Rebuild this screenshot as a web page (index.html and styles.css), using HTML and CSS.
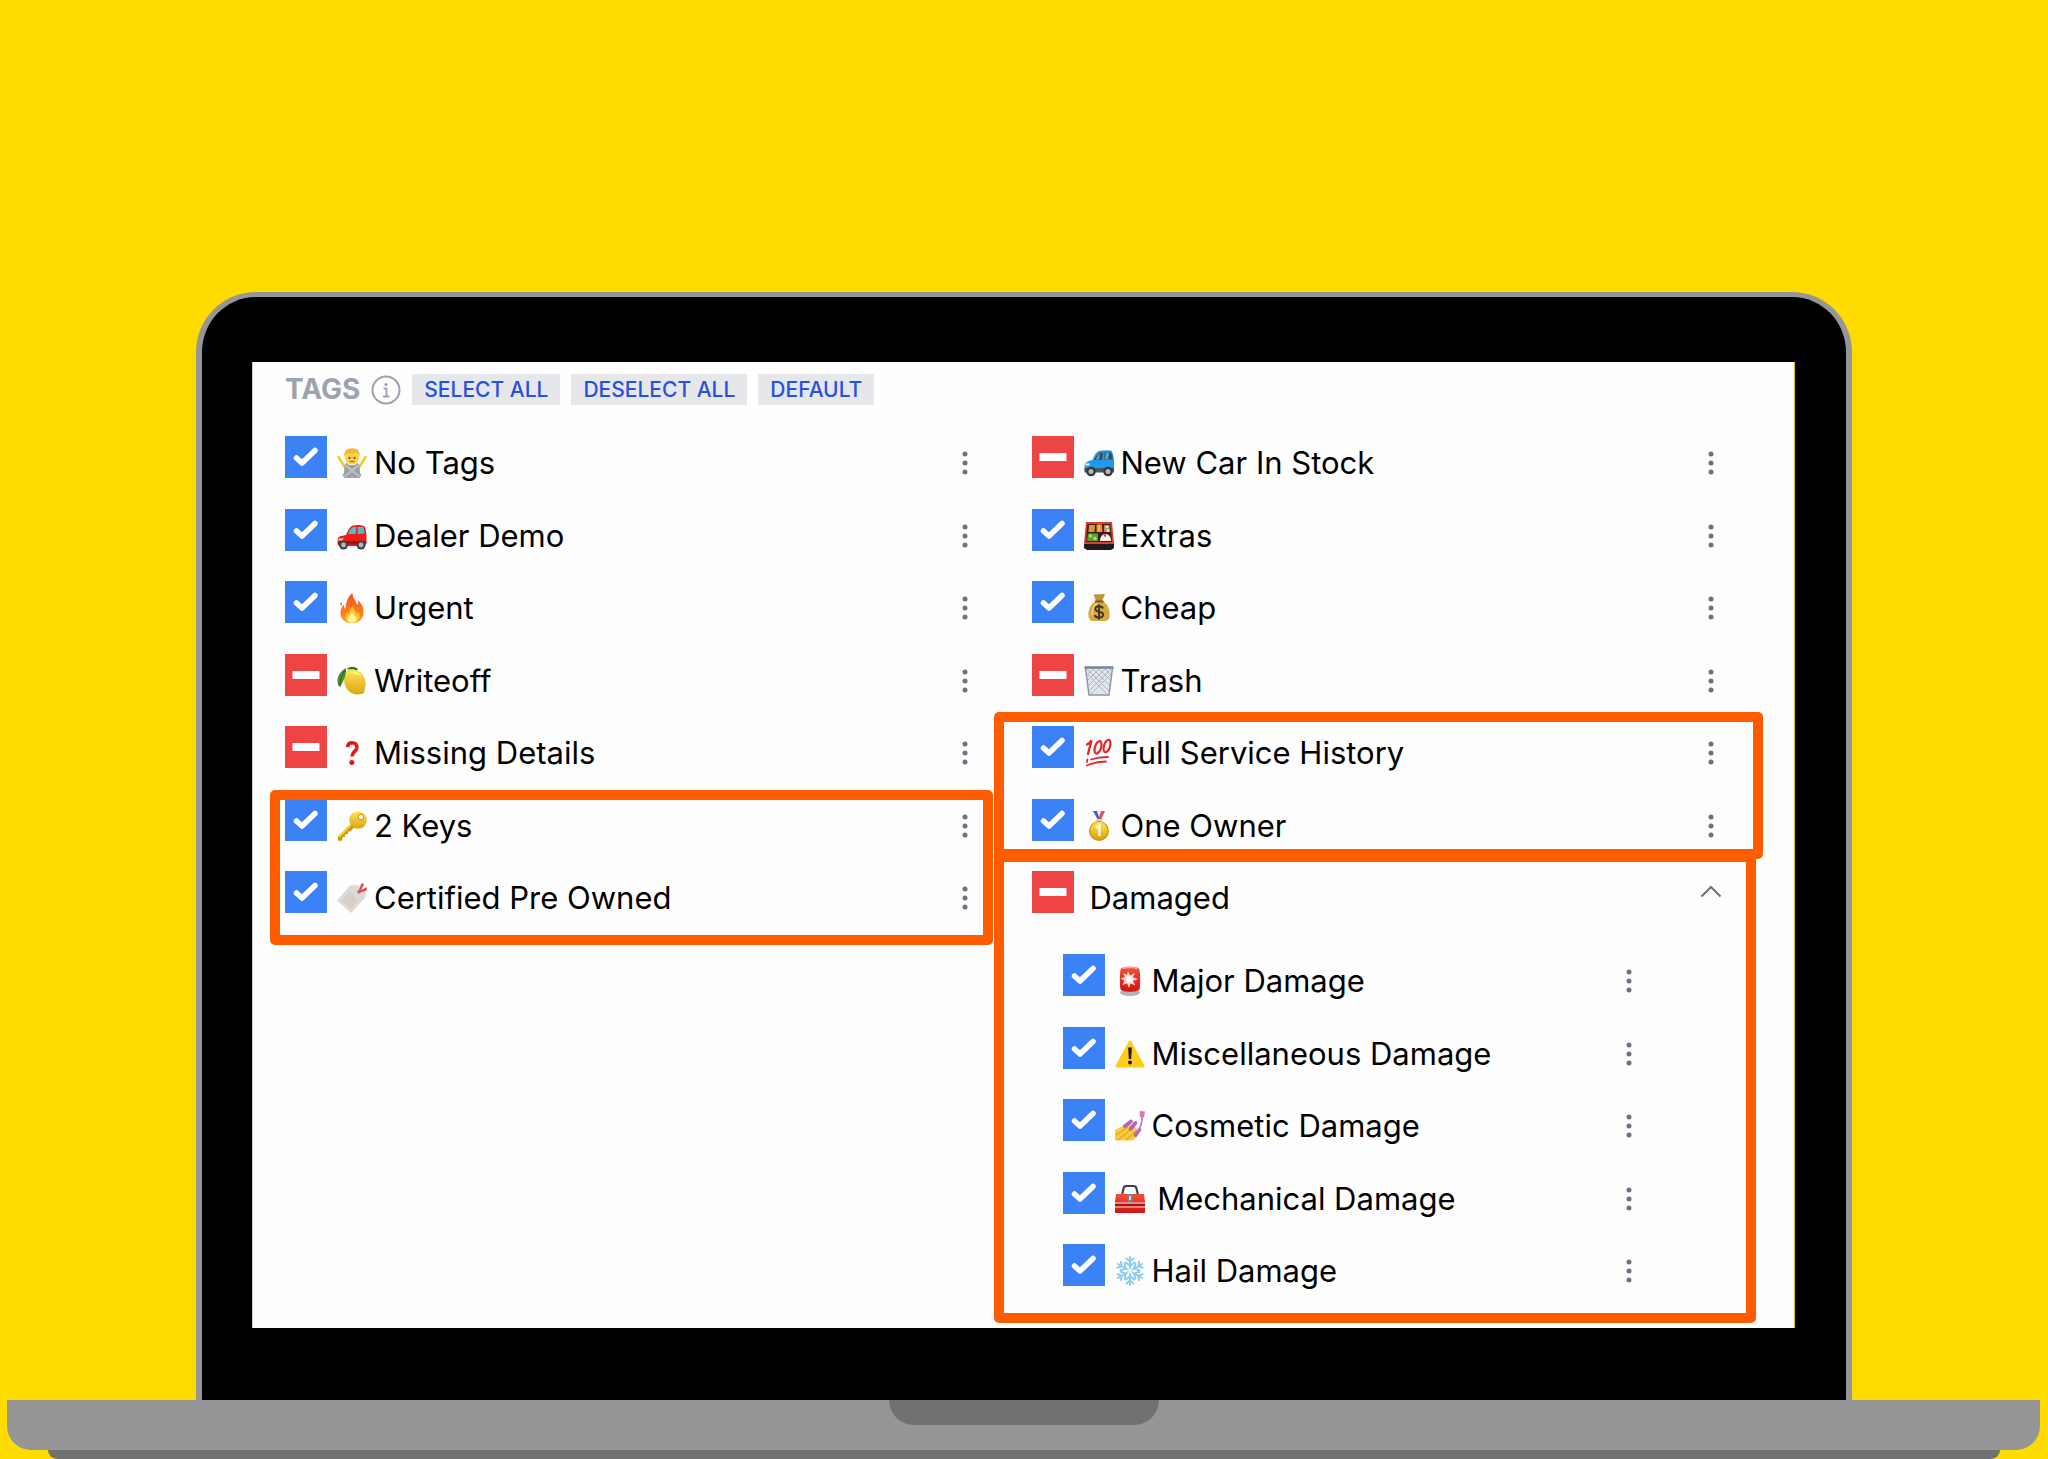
FILE: index.html
```html
<!DOCTYPE html>
<html lang="en">
<head>
    <meta charset="UTF-8">
    <meta name="viewport" content="width=device-width, initial-scale=1.0">
    <title>Tags</title>
    <link rel="stylesheet" href="styles.css">
</head>
<body>
    <svg width="0" height="0" class="defs" aria-hidden="true">
        <symbol id="dots" viewBox="0 0 28 28">
            <circle cx="14" cy="5" r="2.5" />
            <circle cx="14" cy="14" r="2.5" />
            <circle cx="14" cy="23" r="2.5" />
        </symbol>
        <linearGradient id="gold" x1="0" y1="0" x2="0" y2="1">
            <stop offset="0" stop-color="#ffe45a" />
            <stop offset="1" stop-color="#dca510" />
        </linearGradient>
        <linearGradient id="flame" x1="0" y1="0" x2="0" y2="1">
            <stop offset="0" stop-color="#ff4a22" />
            <stop offset="1" stop-color="#ff9a1a" />
        </linearGradient>
        <linearGradient id="redShade" x1="0" y1="0" x2="0" y2="1">
            <stop offset="0" stop-color="#f5503c" />
            <stop offset="1" stop-color="#cf1512" />
        </linearGradient>
    </svg>

    <div class="lid">
        <main class="screen">
            <header class="toolbar">
                <h1 class="title">TAGS</h1>
                <svg class="info" viewBox="0 0 30 30">
                    <circle cx="15" cy="15" r="13.5" fill="none" stroke="#9ca3af" stroke-width="2" />
                    <circle cx="15" cy="9.5" r="1.6" fill="#9ca3af" />
                    <path d="M12.5 13.5h3v7.5M12 21.5h6.5" fill="none" stroke="#9ca3af" stroke-width="1.8" />
                </svg>
                <button class="tool-button">SELECT ALL</button>
                <button class="tool-button">DESELECT ALL</button>
                <button class="tool-button">DEFAULT</button>
            </header>

            <div class="columns">
                <section class="column">
                    <ul class="tag-list">
                        <li class="row">
                            <label class="tag">
                                <input type="checkbox" class="check" checked>
                                <svg class="emoji" viewBox="0 0 30 30">
                                    <path d="M7 18 1.5 9M23 18l5.500-9" stroke="#fbc62f" stroke-width="2.500" stroke-linecap="round" />
                                    <path d="M7 30c0-5-1-11 3-13h10c4 2 3 8 3 13z" fill="#a4a7ab" />
                                    <circle cx="15" cy="9.500" r="7" fill="#ffd046" />
                                    <path d="M7.500 9C6.500 3 10 .3 15 .3S23.500 3 22.500 9c-1-3-2-4-4-4.500-3 1-6 1-8 .5-1.500 1-2.500 2-3 4z" fill="#f3b833" />
                                    <circle cx="12.500" cy="10" r="1" fill="#5b3a16" />
                                    <circle cx="17.500" cy="10" r="1" fill="#5b3a16" />
                                    <path d="M12.500 14c1.500-1 3.500-1 5 0" stroke="#8f4d17" fill="none" />
                                    <path d="m7 29 15-12M23 29 8 17" stroke="#7c7f84" stroke-width="5" />
                                    <path d="m7 29 15-12M23 29 8 17" stroke="#b5b8bc" stroke-width="3.800" />
                                </svg>
                                <span>No Tags</span>
                            </label>
                            <button class="menu" aria-label="No Tags options"><svg><use href="#dots" /></svg></button>
                        </li>
                        <li class="row">
                            <label class="tag">
                                <input type="checkbox" class="check" checked>
                                <svg class="emoji" viewBox="0 0 30 30">
                                    <path d="M1 17c1-2 5-2.500 8-3 2-4.500 4-8.500 7-9.500 4-1 10-.5 11.500 1 1.500 2.500 2 8 2 10v7l-2 2.500H3c-2 0-2.500-2-2.500-4z" fill="#ef1c1c" />
                                    <path d="M11 13c1-3 3-6 5.500-7h3l-1 7zM21 6h5c1 1.500 1.500 4 1.500 6.500l-7 .5z" fill="#58bac9" />
                                    <path d="M1 20h28v3.500H1z" fill="#a80f13" />
                                    <path d="M2 17.500h5l-2 2H1z" fill="#ffd5b0" />
                                    <circle cx="6.500" cy="24" r="4.500" fill="#3f4347" />
                                    <circle cx="6.500" cy="24" r="2.400" fill="#b4b8bc" />
                                    <circle cx="24" cy="24" r="4.500" fill="#3f4347" />
                                    <circle cx="24" cy="24" r="2.400" fill="#b4b8bc" />
                                </svg>
                                <span>Dealer Demo</span>
                            </label>
                            <button class="menu" aria-label="Dealer Demo options"><svg><use href="#dots" /></svg></button>
                        </li>
                        <li class="row">
                            <label class="tag">
                                <input type="checkbox" class="check" checked>
                                <svg class="emoji" viewBox="0 0 30 30">
                                    <path d="M15 30C7 30 3 25 3.500 19c.3-3 1.500-5 3-7.500.3 2.500 1 3.500 2 4.500C9 9 10.500 4 15.500 0c-.3 5 3.500 7 4.500 12 1-1 1.500-2.500 1.300-4.500C25 11 27 15 26.500 20c-.5 6-4.500 10-11.500 10z" fill="url(#flame)" />
                                    <path d="M4 9c-.8 1.500-.8 3 .3 4 1-1.300.8-2.500-.3-4z" fill="#ff5a2a" />
                                    <path d="M15 30c-5 0-7.500-3-7-7 .3-2 1.500-3.500 2.500-4.500.3 1.500 1 2 1.500 2.500.5-4 2-7 4-8.500 0 4 3 5 3.500 8.500.8-.5 1.300-1.500 1.500-2.500C23 21 23 23 22.500 25c-.8 3-3.500 5-7.500 5z" fill="#ffc928" />
                                    <path d="M15 29.500c-3.500 0-5-2-4.300-4.500.8-2 3.300-3 4.300-5.500 1 2.500 3.500 3.500 4.300 5.500.7 2.500-.8 4.500-4.300 4.500z" fill="#fff3a0" />
                                </svg>
                                <span>Urgent</span>
                            </label>
                            <button class="menu" aria-label="Urgent options"><svg><use href="#dots" /></svg></button>
                        </li>
                        <li class="row">
                            <label class="tag">
                                <input type="checkbox" class="check">
                                <svg class="emoji" viewBox="0 0 30 30">
                                    <path d="M10 3c3-3 7-3 11 0l-3 3z" fill="#38732a" />
                                    <path d="M9 5c5-3.500 13-1.500 17 4.500 3 4.500 3.500 10 1.500 14-.3 1 .5 2-.5 3.500-1.500 1.500-3 .8-4.500 1.300C16 29.500 9 25 7.500 17.500 6.500 12 6.500 7 9 5z" fill="url(#gold)" />
                                    <path d="M12 6c5-2 10 0 12 4-4-2-9-2-12-4z" fill="#fff07a" />
                                    <path d="M9 2C4 4.500 0 10 .5 15.500c0 3 1 5 2.500 5.500C6 16 9.500 10 9 2z" fill="#4c8c33" />
                                    <path d="M8 4C5 9 3 14 3 20" stroke="#28601f" fill="none" />
                                </svg>
                                <span>Writeoff</span>
                            </label>
                            <button class="menu" aria-label="Writeoff options"><svg><use href="#dots" /></svg></button>
                        </li>
                        <li class="row">
                            <label class="tag">
                                <input type="checkbox" class="check">
                                <svg class="emoji" viewBox="0 0 30 30">
                                    <path d="M10.500 9c.3-3 2-4.200 4.600-4.200 3 0 4.900 1.800 4.900 4.400 0 4.200-5 4.300-5 9.300" fill="none" stroke="#ee1310" stroke-width="3.500" />
                                    <circle cx="14.800" cy="24.600" r="2.500" fill="#ee1310" />
                                </svg>
                                <span>Missing Details</span>
                            </label>
                            <button class="menu" aria-label="Missing Details options"><svg><use href="#dots" /></svg></button>
                        </li>
                        <li class="row">
                            <label class="tag">
                                <input type="checkbox" class="check" checked>
                                <svg class="emoji" viewBox="0 0 30 30">
                                    <path d="M15 12 1 25.500v4l3 .5 1.500-2 .2-2 2.300-.3.300-2.400 2.700-.3.200-2.500 2.300-.2 5-5.300z" fill="#c9960f" />
                                    <path d="M15.500 12.500 2 26" stroke="#f4cd3c" stroke-width="2" />
                                    <circle cx="21" cy="9" r="8.800" fill="url(#gold)" />
                                    <circle cx="24" cy="6" r="2.800" fill="#fff" stroke="#c4940f" />
                                </svg>
                                <span>2 Keys</span>
                            </label>
                            <button class="menu" aria-label="2 Keys options"><svg><use href="#dots" /></svg></button>
                        </li>
                        <li class="row">
                            <label class="tag">
                                <input type="checkbox" class="check" checked>
                                <svg class="emoji" viewBox="0 0 30 30">
                                    <path d="m0 17.500 13-15 8-.5 8 8.500-1 4.500-14 15z" fill="#dfd9d3" />
                                    <path d="M5 17.500 13 9l8 9-7.500 8z" fill="#d0c9c2" opacity=".6" />
                                    <circle cx="22" cy="9" r="1.800" fill="#9c8f88" />
                                    <path d="M22 9 25 1M22 9l4-7.500M22 9l8-4M22 9l7-2" stroke="#ea4550" stroke-width="1.600" stroke-linecap="round" />
                                </svg>
                                <span>Certified Pre Owned</span>
                            </label>
                            <button class="menu" aria-label="Certified Pre Owned options"><svg><use href="#dots" /></svg></button>
                        </li>
                    </ul>
                    <div class="highlight highlight-keys"></div>
                </section>

                <section class="column">
                    <ul class="tag-list">
                        <li class="row">
                            <label class="tag">
                                <input type="checkbox" class="check">
                                <svg class="emoji" viewBox="0 0 30 30">
                                    <path d="M.5 17c1-3 5-4.500 8-5 2-5 4-8.500 7.500-9.200 4-.8 9-.8 11.500 0C29.500 6 30 11 30 14v10H2c-1.500 0-1.500-3-1.500-7z" fill="#1e9be8" />
                                    <path d="M10.500 12c1.500-4 3.500-7 6-7.500h2.500l-1 7.500zM20.500 4.500H27c1 2 1.500 4.500 1.500 7h-8z" fill="#31505f" />
                                    <path d="M12 11.500c1-3 2.500-5 4-6l-1 6zM22 5h3l-1 6h-3z" fill="#67a6bb" />
                                    <path d="M.5 20H30v4.500H.5z" fill="#4c555c" />
                                    <path d="M2 15.500h4l-1 2H1z" fill="#e3f6ff" />
                                    <circle cx="7" cy="23.500" r="4.800" fill="#33373b" />
                                    <circle cx="7" cy="23.500" r="2.500" fill="#b4b8bc" />
                                    <circle cx="24" cy="23.500" r="4.800" fill="#33373b" />
                                    <circle cx="24" cy="23.500" r="2.500" fill="#b4b8bc" />
                                </svg>
                                <span>New Car In Stock</span>
                            </label>
                            <button class="menu" aria-label="New Car In Stock options"><svg><use href="#dots" /></svg></button>
                        </li>
                        <li class="row">
                            <label class="tag">
                                <input type="checkbox" class="check" checked>
                                <svg class="emoji" viewBox="0 0 30 30">
                                    <path d="M2 1h26l2 21-1 3H1l-1-3z" fill="#d9432e" />
                                    <path d="M0 23h30v4l-3 2H3l-3-2z" fill="#211a1a" />
                                    <path d="M3.500 3h23L28 21H2z" fill="#3b1d15" />
                                    <path d="M5 4h6l-.5 7h-6z" fill="#d89a32" />
                                    <path d="M12.500 3.500h5.500l.5 7.500h-6z" fill="#ff8a1e" />
                                    <path d="M15 3.500v7.500" stroke="#ffd28a" />
                                    <path d="M20 4h5.500l.8 7H20z" fill="#a98d6d" />
                                    <circle cx="23" cy="6" r="1.500" fill="#f2e2c4" />
                                    <circle cx="24" cy="9.500" r="1.500" fill="#f2e2c4" />
                                    <path d="M4 12.500h10v7.500H3z" fill="#5ba02a" />
                                    <circle cx="6.500" cy="15" r="1.700" fill="#b3e05c" />
                                    <circle cx="11" cy="17.500" r="1.700" fill="#b3e05c" />
                                    <path d="M16 20c0-4 2-7 5.500-7s5.500 3 5.500 7z" fill="#f3efef" />
                                    <circle cx="21" cy="14.500" r="1.200" fill="#e43a3a" />
                                </svg>
                                <span>Extras</span>
                            </label>
                            <button class="menu" aria-label="Extras options"><svg><use href="#dots" /></svg></button>
                        </li>
                        <li class="row">
                            <label class="tag">
                                <input type="checkbox" class="check" checked>
                                <svg class="emoji" viewBox="0 0 30 30">
                                    <path d="M9.500 1c2 1.300 3 0 5 .3s4-.8 6.500.2l-3 6.500h-6z" fill="#c1913a" />
                                    <path d="M11.500 8h7.500C24 11.500 26 16.500 25.500 23c-.3 4-2.500 5-5 5h-11c-3 0-4.700-1.500-5-5C4 16.500 6.500 11.500 11.500 8z" fill="#d6a93f" />
                                    <path d="M8 22c0-5 1.500-9 5-12" stroke="#efce72" stroke-width="2" fill="none" />
                                    <path d="M11 8.500h8.500" stroke="#7d571b" stroke-width="2" />
                                    <path d="M19 15.500c-.5-1.500-2-2.200-4-2.200-2.300 0-3.800 1.100-3.800 2.700 0 3.800 8 1.800 8 5.600 0 1.800-1.600 3-4.200 3-2.200 0-3.900-.9-4.200-2.600M15 11.500v15" fill="none" stroke="#3d3a2a" stroke-width="1.900" />
                                </svg>
                                <span>Cheap</span>
                            </label>
                            <button class="menu" aria-label="Cheap options"><svg><use href="#dots" /></svg></button>
                        </li>
                        <li class="row">
                            <label class="tag">
                                <input type="checkbox" class="check">
                                <svg class="emoji" viewBox="0 0 30 30">
                                    <path d="M1.500 1.500h27L25 29.500H5z" fill="#e3e7ed" />
                                    <path d="m4 9 19 19M3 3l22 22M9 3l17 17M15 3l12 12M21 3l6 6M26 9 7 28M27 3 5 25M21 3 4 20M15 3 3 15M9 3 3 9" stroke="#a9b2be" />
                                    <path d="M1.500 2 5 29h20l3.500-27" fill="none" stroke="#8c97a5" stroke-width="1.500" />
                                    <path d="M.5 1.500h29" stroke="#758397" stroke-width="2.500" />
                                </svg>
                                <span>Trash</span>
                            </label>
                            <button class="menu" aria-label="Trash options"><svg><use href="#dots" /></svg></button>
                        </li>
                        <li class="row">
                            <label class="tag">
                                <input type="checkbox" class="check" checked>
                                <svg class="emoji" viewBox="0 0 30 30">
                                    <g fill="none" stroke="#e3262b" stroke-linecap="round">
                                        <path d="M3 6.500C5 5.500 6.500 4 7.500 2.500L4 16" stroke-width="2.300" />
                                        <ellipse cx="14" cy="9.300" rx="3" ry="6.500" transform="rotate(18 14 9.300)" stroke-width="2.200" />
                                        <ellipse cx="23" cy="8" rx="3" ry="6.500" transform="rotate(18 23 8)" stroke-width="2.200" />
                                        <path d="M7 21.500c6-2 11-2.600 17-2.500M3 27.500l2-1c6-2 12-3 17-3M3.500 21.500 3 24" stroke-width="1.800" />
                                    </g>
                                </svg>
                                <span>Full Service History</span>
                            </label>
                            <button class="menu" aria-label="Full Service History options"><svg><use href="#dots" /></svg></button>
                        </li>
                        <li class="row">
                            <label class="tag">
                                <input type="checkbox" class="check" checked>
                                <svg class="emoji" viewBox="0 0 30 30">
                                    <path d="M9 0h4l5 9h-4z" fill="#3f5fc0" />
                                    <path d="M13 0h2l1.500 5-1 3z" fill="#e9edf7" />
                                    <path d="M21 0h-4l-3 9h3z" fill="#e4505c" />
                                    <path d="M12.500 8h5v3.500h-5z" fill="#c3ccd9" />
                                    <circle cx="15" cy="20" r="10" fill="#d89a0b" />
                                    <circle cx="15" cy="19.500" r="8.500" fill="url(#gold)" />
                                    <path d="M12 17l3.500-2.500V25" fill="none" stroke="#fff6b8" stroke-width="2.800" />
                                </svg>
                                <span>One Owner</span>
                            </label>
                            <button class="menu" aria-label="One Owner options"><svg><use href="#dots" /></svg></button>
                        </li>
                        <li class="row">
                            <label class="tag tag-parent">
                                <input type="checkbox" class="check">
                                <span>Damaged</span>
                            </label>
                            <button class="menu toggle" aria-label="Collapse Damaged">
                                <svg viewBox="0 0 28 28"><path d="m4.500 19.500 9.500-9.500 9.500 9.500" fill="none" stroke="#6b7280" stroke-width="2" /></svg>
                            </button>
                        </li>
                    </ul>

                    <ul class="tag-list tag-sublist">
                        <li class="row">
                            <label class="tag">
                                <input type="checkbox" class="check" checked>
                                <svg class="emoji" viewBox="0 0 30 30">
                                    <ellipse cx="15" cy="26.500" rx="10" ry="3.500" fill="#b3b3b5" />
                                    <path d="M6 2.500C8 0 22 0 24 2.500c1.500 3 1.500 15 .5 21-2.500 3-16.500 3-19 0-1-6-1-18 .5-21z" fill="url(#redShade)" />
                                    <path d="M7.500 2.500c3-1.500 12-1.500 15 0" stroke="#ffa493" stroke-width="1.500" fill="none" />
                                    <path d="m13 5 2 4.500L20 7l-2 4.500 5 1.500-5 2 2.500 4.500-5-2L14 22l-2-4.500L7.500 19l2-4.500-4-2 4.500-1.500L8 7l4 2z" fill="#ffd9d0" />
                                    <circle cx="14" cy="13" r="3" fill="#fff" />
                                </svg>
                                <span>Major Damage</span>
                            </label>
                            <button class="menu" aria-label="Major Damage options"><svg><use href="#dots" /></svg></button>
                        </li>
                        <li class="row">
                            <label class="tag">
                                <input type="checkbox" class="check" checked>
                                <svg class="emoji" viewBox="0 0 30 30">
                                    <path d="M13.800 2.200c.5-1 1.900-1 2.400 0l13.300 24.500c.5 1-.1 1.800-1 1.800h-27c-.9 0-1.500-.8-1-1.800z" fill="#ffcd1c" />
                                    <path d="M13.200 8.500h3.600L16.200 20h-2.400z" fill="#1d1a10" />
                                    <circle cx="15" cy="23.500" r="2" fill="#1d1a10" />
                                </svg>
                                <span>Miscellaneous Damage</span>
                            </label>
                            <button class="menu" aria-label="Miscellaneous Damage options"><svg><use href="#dots" /></svg></button>
                        </li>
                        <li class="row">
                            <label class="tag">
                                <input type="checkbox" class="check" checked>
                                <svg class="emoji" viewBox="0 0 30 30">
                                    <path d="M0 19c4-2 8-4 11-5.500l8 .5 5 8c-1 3-3 6-7 7.500H0z" fill="#fbc93c" />
                                    <path d="m1 24 12-8M3 29l16-13M11 29l11-10" stroke="#d8951f" fill="none" />
                                    <path d="m10 15 6-4.500M15.500 18l5-6M20.500 24l4-5.500" stroke="#b565b4" stroke-width="3.800" stroke-linecap="round" />
                                    <path d="M22 20c4-3 5-8 5-14" stroke="#cc7bc5" stroke-width="1.800" fill="none" />
                                    <path d="m24.500 0 5.500.5-1 6-4-.5z" fill="#e470b4" />
                                </svg>
                                <span>Cosmetic Damage</span>
                            </label>
                            <button class="menu" aria-label="Cosmetic Damage options"><svg><use href="#dots" /></svg></button>
                        </li>
                        <li class="row">
                            <label class="tag">
                                <input type="checkbox" class="check" checked>
                                <svg class="emoji" viewBox="0 0 30 30">
                                    <path d="m7 11 1.500-6.500c.3-2 1.500-2.500 3-2.500h7c1.500 0 2.700.5 3 2.500L23 11" fill="none" stroke="#3b4145" stroke-width="2.200" />
                                    <path d="M1 10h28l1 8v11H0V18z" fill="url(#redShade)" />
                                    <path d="M0 19h30M0 23h30" stroke="#e4dede" />
                                    <path d="M0 21h30" stroke="#8a1114" stroke-width="1.500" />
                                    <path d="M12.500 10h5v8h-5z" fill="#7f8488" />
                                    <path d="M14 12h2v4h-2z" fill="#d5d8da" />
                                </svg>
                                <span>&thinsp;Mechanical Damage</span>
                            </label>
                            <button class="menu" aria-label="Mechanical Damage options"><svg><use href="#dots" /></svg></button>
                        </li>
                        <li class="row">
                            <label class="tag">
                                <input type="checkbox" class="check" checked>
                                <svg class="emoji" viewBox="-15 -15 30 30">
                                    <g id="arm" fill="none" stroke="#8fcdf0" stroke-width="2" stroke-linecap="round">
                                        <path d="M0 0v-14M0-5l4-3.500M0-5l-4-3.500M0-9.500l3.500-3M0-9.500l-3.500-3" />
                                    </g>
                                    <use href="#arm" transform="rotate(60)" />
                                    <use href="#arm" transform="rotate(120)" />
                                    <use href="#arm" transform="rotate(180)" />
                                    <use href="#arm" transform="rotate(240)" />
                                    <use href="#arm" transform="rotate(300)" />
                                    <circle r="2.500" fill="#d8f1ff" />
                                </svg>
                                <span>Hail Damage</span>
                            </label>
                            <button class="menu" aria-label="Hail Damage options"><svg><use href="#dots" /></svg></button>
                        </li>
                    </ul>
                    <div class="highlight highlight-history"></div>
                    <div class="highlight highlight-damage"></div>
                </section>
            </div>
        </main>
    </div>
    <div class="base">
        <div class="notch"></div>
    </div>
    <div class="foot"></div>
</body>
</html>
```
FILE: styles.css
```css
* {
    box-sizing: border-box;
}

body {
    margin: 0;
    padding-top: 292px;
    background-color: #ffdb00;
    font-family: Inter, Arial, sans-serif;
    color: #000;
}

.defs {
    position: absolute;
}

/* laptop */
.lid {
    margin: 0 196px;
    padding: 65px 51px 72px 50px;
    background-color: #000;
    border: 6px solid #969696;
    border-top-width: 5px;
    border-bottom: 0;
    border-radius: 60px 60px 0 0;
}

.screen {
    padding: 12px 33px 30px 32px;
    background-color: #fefefe;
    border-left: 1px solid #c9c9cd;
    border-right: 1px solid #dcc000;
}

.base {
    margin: 0 8px 0 7px;
    height: 50px;
    background-color: #969696;
    border-radius: 0 0 24px 24px;
}

.notch {
    width: 270px;
    height: 25px;
    margin: 0 auto;
    background-color: #717171;
    border-radius: 0 0 25px 25px;
}

.foot {
    margin: 0 48px;
    height: 9px;
    background-color: #717171;
    border-radius: 0 0 9px 9px;
}

/* toolbar */
.toolbar {
    display: flex;
    align-items: center;
    gap: 11px;
    margin-bottom: 31px;
}

.title {
    margin: 0;
    font-size: 28px;
    line-height: 31px;
    font-weight: 700;
    color: #9ca3af;
}

.info {
    width: 30px;
    height: 30px;
}

.tool-button {
    padding: 0 12px;
    border: none;
    background-color: #e5e7eb;
    color: #2a51dc;
    font-family: inherit;
    font-size: 21px;
    line-height: 31px;
    font-weight: 500;
    cursor: pointer;
}

/* tags */
.columns {
    display: grid;
    grid-template-columns: 1fr 1fr;
    gap: 17px;
}

.column {
    position: relative;
}

.tag-list {
    display: flex;
    flex-direction: column;
    justify-content: space-between;
    min-height: 489px;
    margin: 0;
    padding: 0 36px 0 0;
    list-style: none;
}

.tag-sublist {
    min-height: 344px;
    margin-top: 29px;
    padding: 0 118px 0 31px;
}

.row {
    display: flex;
    align-items: center;
    justify-content: space-between;
    height: 54px;
}

.tag {
    display: flex;
    align-items: center;
    height: 54px;
    font-size: 31px;
    line-height: 52px;
    cursor: pointer;
}

.check {
    appearance: none;
    align-self: flex-start;
    width: 42px;
    height: 42px;
    margin: 0 10px 0 0;
    background: #ef4444 url("data:image/svg+xml,%3Csvg xmlns='http://www.w3.org/2000/svg' viewBox='0 0 42 42'%3E%3Cpath d='M7.5 17h27v8h-27z' fill='white'/%3E%3C/svg%3E");
}

.check:checked {
    background: #3b82f6 url("data:image/svg+xml,%3Csvg xmlns='http://www.w3.org/2000/svg' viewBox='0 0 42 42'%3E%3Cpath d='M11.5 22 17 27 30 14.5' fill='none' stroke='white' stroke-width='5.5' stroke-linecap='round' stroke-linejoin='round'/%3E%3C/svg%3E");
}

.emoji {
    width: 30px;
    height: 30px;
    margin-right: 7px;
}

.tag-parent {
    gap: 6px;
}

.menu {
    width: 28px;
    height: 28px;
    padding: 0;
    border: none;
    background: none;
    cursor: pointer;
}

.menu svg {
    display: block;
    width: 28px;
    height: 28px;
    fill: #6b7280;
}

.toggle {
    align-self: flex-start;
    margin-top: 6px;
}

/* callout frames drawn over the lists */
.highlight {
    position: absolute;
    border: 10px solid #ff5c00;
    border-radius: 5px;
    pointer-events: none;
}

.highlight-keys {
    top: 354px;
    left: -15px;
    right: 22px;
    height: 155px;
}

.highlight-history {
    top: 276px;
    left: -38px;
    right: -2px;
    height: 147px;
}

.highlight-damage {
    top: 416px;
    left: -38px;
    right: 5px;
    bottom: -25px;
}
```
